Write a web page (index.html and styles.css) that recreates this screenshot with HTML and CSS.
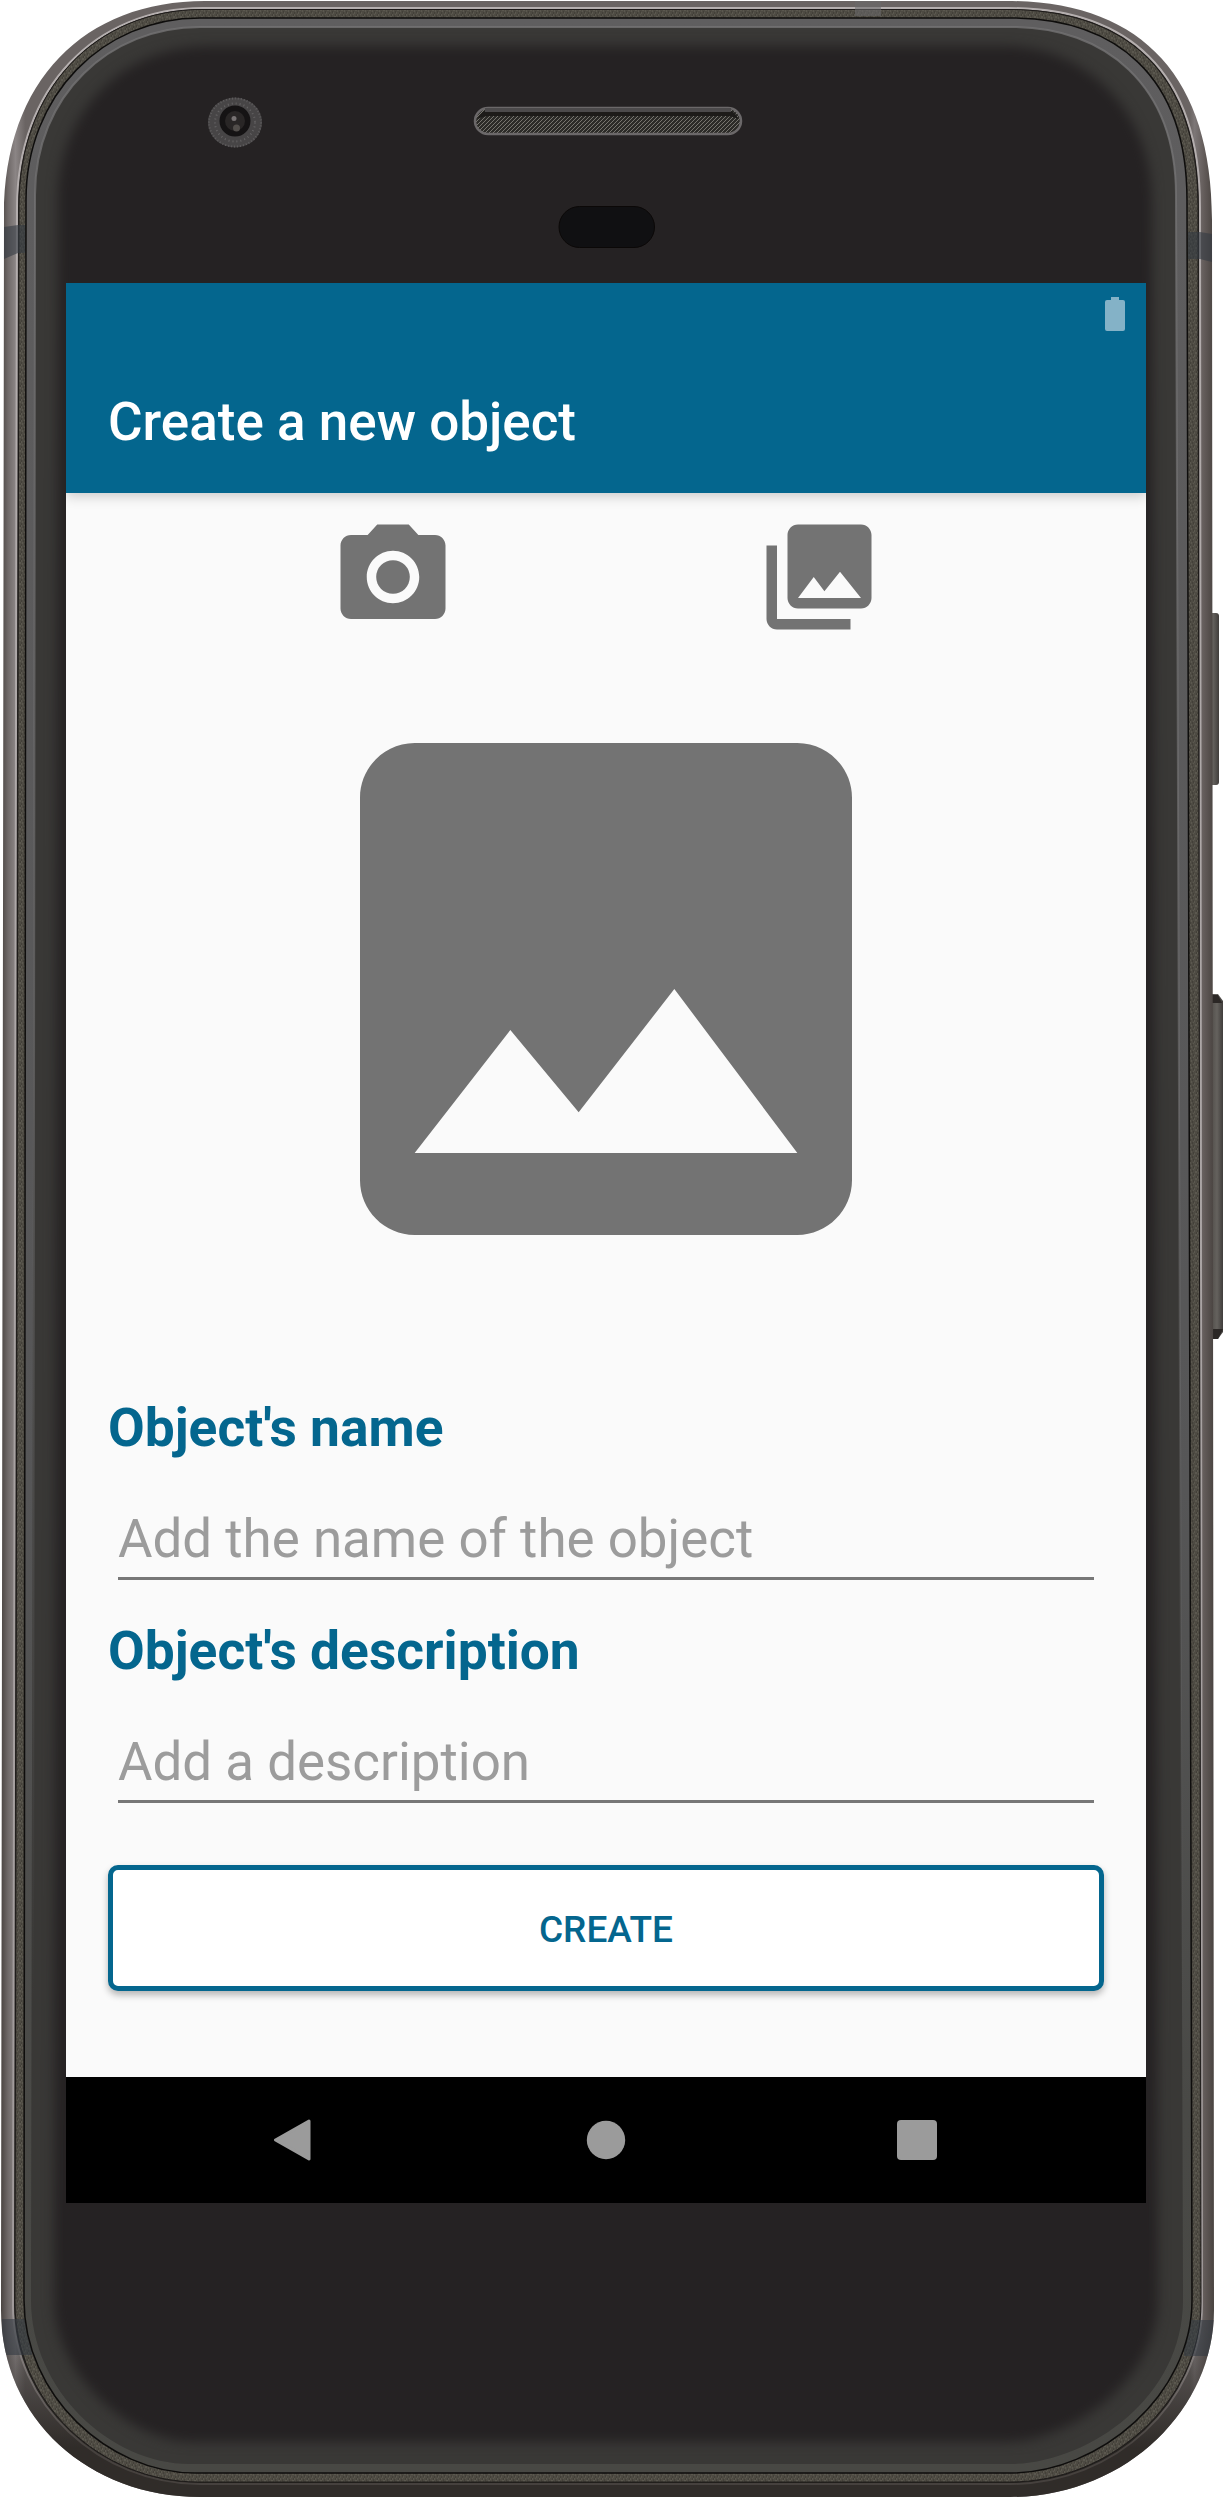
FILE: index.html
```html
<!DOCTYPE html>
<html lang="en">
<head>
<meta charset="utf-8">
<title>Create a new object</title>
<link rel="stylesheet" href="styles.css">
</head>
<body>
<div class="device">
  <svg class="frame" width="1224" height="2498" viewBox="0 0 1224 2498" aria-hidden="true">
    <defs>
      <linearGradient id="metal" x1="0" x2="1" y1="0" y2="0">
        <stop offset="0" stop-color="#4a4441"/><stop offset=".006" stop-color="#706a69"/><stop offset=".012" stop-color="#8b8585"/>
        <stop offset=".02" stop-color="#6a6463"/><stop offset=".98" stop-color="#6a6463"/><stop offset=".984" stop-color="#7d7777"/>
        <stop offset=".992" stop-color="#625b59"/><stop offset="1" stop-color="#494340"/>
      </linearGradient>
      <linearGradient id="shade" x1="0" x2="0" y1="0" y2="1">
        <stop offset="0" stop-color="#2c2a28" stop-opacity="0"/><stop offset=".93" stop-color="#2c2a28" stop-opacity="0"/>
        <stop offset=".98" stop-color="#302c29" stop-opacity="1"/><stop offset="1" stop-color="#302c29"/>
      </linearGradient>
      <linearGradient id="rim" x1="0" x2="0" y1="0" y2="1">
        <stop offset="0" stop-color="#5f5e5f"/><stop offset=".6" stop-color="#565657"/><stop offset=".85" stop-color="#494946"/><stop offset="1" stop-color="#484844"/>
      </linearGradient>
      <linearGradient id="edge" x1="0" x2="0" y1="0" y2="1">
        <stop offset="0" stop-color="#b5afaf"/><stop offset=".93" stop-color="#a09a9a"/><stop offset=".985" stop-color="#46413e"/>
      </linearGradient>
      <linearGradient id="glint" gradientUnits="userSpaceOnUse" x1="0" x2="0" y1="0" y2="2000">
        <stop offset="0" stop-color="#747374" stop-opacity=".8"/><stop offset=".5" stop-color="#747374" stop-opacity=".6"/><stop offset="1" stop-color="#747374" stop-opacity="0"/>
      </linearGradient>
      <linearGradient id="key" x1="0" x2="1" y1="0" y2="0">
        <stop offset="0" stop-color="#47433f"/><stop offset=".6" stop-color="#65625e"/><stop offset="1" stop-color="#403d3b"/>
      </linearGradient>
      <pattern id="grain" width="7" height="7" patternUnits="userSpaceOnUse">
        <rect width="7" height="7" fill="#4e4b43"/>
        <path d="M0 1h1M3 0h1M5 3h2M1 4h1M4 6h1" stroke="#68655b"/>
        <path d="M2 2h1M6 1h1M3 5h1M0 6h1" stroke="#37352f"/>
      </pattern>
      <pattern id="mesh" width="4" height="4" patternUnits="userSpaceOnUse">
        <rect width="4" height="4" fill="#2c2b28"/><path d="M-1 3L3 -1M1 5L5 1" stroke="#77756f" stroke-width="1"/>
      </pattern>
      <filter id="soft" x="-5%" y="-5%" width="110%" height="110%" color-interpolation-filters="sRGB"><feGaussianBlur stdDeviation="6"/></filter>
      <clipPath id="glassClip"><path d="M200 27H1012C1105 27 1176 85 1176 195L1183 2300C1183 2400 1085 2464 1010 2464H190C110 2464 31 2390 31 2300L35 195C35 95 110 27 200 27Z"/></clipPath>
      <clipPath id="bodyClip"><path d="M205 1H1007C1140 1 1212 75 1212 220L1214 2310C1214 2410 1125 2497 1010 2497H200C90 2497 1 2420 1 2310L4 215C4 80 85 1 205 1Z"/></clipPath>
    </defs>

    <rect x="1204" y="613" width="15" height="172" rx="3" fill="url(#key)"/>
    <path d="M1208 994h10l5 7V1332l-5 7h-10z" fill="url(#key)"/>
    <path d="M1208 995h10l4 8h-14zM1208 1329h15l-5 10h-10z" fill="#2b2725"/>

    <path d="M205 1H1007C1140 1 1212 75 1212 220L1214 2310C1214 2410 1125 2497 1010 2497H200C90 2497 1 2420 1 2310L4 215C4 80 85 1 205 1Z" fill="url(#metal)"/>
    <path d="M205 1H1007C1140 1 1212 75 1212 220L1214 2310C1214 2410 1125 2497 1010 2497H200C90 2497 1 2420 1 2310L4 215C4 80 85 1 205 1Z" fill="url(#shade)"/>
    <path d="M203 8H1008C1127 8 1200 70 1200 208L1202 2305C1202 2402 1115 2484 1010 2484H200C100 2484 13 2405 13 2305L17 208C17 88 95 8 203 8Z" fill="#262421" stroke="url(#edge)" stroke-width="2"/>
    <path d="M202 9.500H1008C1125 9.500 1198 71 1198 206L1201 2303C1201 2400 1112 2482 1010 2482H198C100 2482 15 2402 15 2303L19 206C19 89 96 9.500 202 9.500Z" fill="url(#grain)" stroke="#1d1a19" stroke-width="1"/>
    <g clip-path="url(#bodyClip)">
      <path d="M4 227l14-2h8v28h-8l-14 6zM1188 232h12l12 2v28l-12-3h-12zM2 2319h30v36H2zM1184 2320h32v36h-32z" fill="#343a42" fill-opacity=".6"/>
      <path d="M855 0h26v16h-26z" fill="#6a696b" fill-opacity=".55"/>
    </g>
    <path d="M200 18H1010C1115 18 1187 75 1187 200L1192 2300C1192 2395 1100 2473 1010 2473H195C108 2473 24 2395 24 2300L26 200C26 95 103 18 200 18Z" fill="url(#rim)" stroke="#0e0d0c" stroke-width="1.500"/>
    <g clip-path="url(#glassClip)">
      <rect width="1224" height="2498" fill="#393836"/>
      <path d="M210 46H1005C1084 46 1152 110 1152 200L1158 2300C1158 2380 1070 2442 1005 2442H195C125 2442 54 2370 54 2300L58 200C58 115 120 46 210 46Z" fill="#252223" filter="url(#soft)"/>
    </g>
    <path d="M33 2000L35 195C35 95 110 27 200 27H1012C1105 27 1176 85 1176 195L1182 2000" fill="none" stroke="url(#glint)" stroke-width="2"/>

    <ellipse cx="235" cy="122.500" rx="27" ry="25" fill="#474546"/>
    <ellipse cx="235" cy="122.500" rx="26" ry="24" fill="none" stroke="#5e5c5d" stroke-width="2" stroke-dasharray="1 2"/>
    <ellipse cx="235" cy="122.500" rx="20" ry="19" fill="none" stroke="#656364" stroke-width="2" stroke-dasharray="1 3"/>
    <circle cx="235" cy="121" r="15.500" fill="#151314"/>
    <circle cx="235" cy="121" r="10" fill="#292626"/>
    <circle cx="234" cy="118.500" r="2.500" fill="#777273"/>
    <circle cx="236.500" cy="128" r="3.500" fill="#524e4b"/>

    <rect x="475" y="108" width="266" height="26" rx="13" fill="url(#mesh)" stroke="#6b6869" stroke-width="2.500"/>
    <path d="M478 119q3-9 12-9h236q9 0 12 9-5-3-12-3H490q-7 0-12 3z" fill="#1d1b19"/>
    <path d="M485 110H731" stroke="#4c4a4b" stroke-width="4"/>
    <rect x="559" y="206.500" width="95.500" height="41" rx="20.500" fill="#101012" stroke="#0b0807"/>
  </svg>

  <main class="screen">
    <div class="status-bar">
      <svg class="battery" width="20" height="34" viewBox="0 0 20 34"><path d="M6 0h8v3h4q2 0 2 2v27q0 2-2 2H2q-2 0-2-2V5q0-2 2-2h4z" fill="#84b2c7"/></svg>
    </div>
    <header class="app-bar"><h1 class="title">Create a new object</h1></header>
    <section class="content">
      <div class="sources">
        <svg class="source-icon" viewBox="0 0 24 24"><circle cx="12" cy="12" r="3.200"/><path d="M9 2L7.170 4H4c-1.100 0-2 .9-2 2v12c0 1.100.9 2 2 2h16c1.100 0 2-.9 2-2V6c0-1.100-.9-2-2-2h-3.170L15 2H9zm3 15c-2.760 0-5-2.240-5-5s2.240-5 5-5 5 2.240 5 5-2.240 5-5 5z"/></svg>
        <svg class="source-icon" viewBox="0 0 24 24"><path d="M22 16V4c0-1.100-.9-2-2-2H8c-1.100 0-2 .9-2 2v12c0 1.100.9 2 2 2h12c1.100 0 2-.9 2-2zm-11-4l2.030 2.710L16 11l4 5H8l3-4zM2 6v14c0 1.100.9 2 2 2h14v-2H4V6H2z"/></svg>
      </div>
      <svg class="preview" viewBox="0 0 24 24"><path d="M21 19V5c0-1.100-.9-2-2-2H5c-1.100 0-2 .9-2 2v14c0 1.100.9 2 2 2h14c1.100 0 2-.9 2-2zM8.500 13.500l2.500 3.010L14.500 12l4.500 6H5l3.500-4.500z"/></svg>
      <form class="form">
        <label class="label" for="name">Object's name</label>
        <input class="field" id="name" placeholder="Add the name of the object">
        <label class="label" for="description">Object's description</label>
        <input class="field" id="description" placeholder="Add a description">
        <button class="create" type="button">CREATE</button>
      </form>
    </section>
    <nav class="nav-bar">
      <svg width="42" height="42" viewBox="0 0 42 42"><path class="back" d="M35 2L1.500 21l33.500 19z"/></svg>
      <svg width="42" height="42" viewBox="0 0 42 42"><circle cx="21" cy="21" r="19.200"/></svg>
      <svg width="42" height="42" viewBox="0 0 42 42"><rect x="1" y="1" width="40" height="40" rx="4"/></svg>
    </nav>
  </main>
</div>
</body>
</html>
```
FILE: styles.css
```css
* { box-sizing: border-box; }
body { margin: 0; background: #fff; font-family: Roboto, "Liberation Sans", sans-serif; }
.device { position: relative; width: 1224px; height: 2498px; padding: 283px 78px 295px 66px; overflow: hidden; }
.frame { position: absolute; inset: 0; }
.screen { position: relative; display: flex; flex-direction: column; width: 1080px; height: 1920px; background: #fafafa; }
.status-bar { display: flex; justify-content: flex-end; flex: 0 0 63px; padding: 14px 21px 0 0; background: #04668e; }
.app-bar { display: flex; align-items: center; flex: 0 0 147px; padding: 5px 42px 0; background: #04668e; box-shadow: 0 3px 12px rgba(0, 0, 0, .2); clip-path: inset(0 0 -16px 0); }
.title { margin: 0; color: #fff; font-size: 53px; font-weight: 500; line-height: 62px; }
.content { display: flex; flex: 1; flex-direction: column; padding: 21px 42px 0; }
.sources { display: flex; justify-content: center; gap: 300px; height: 126px; }
.source-icon { width: 126px; height: 126px; fill: #737373; }
.preview { align-self: center; width: 656px; height: 656px; margin-top: 21px; fill: #737373; }
.form { display: flex; flex-direction: column; margin-top: 80px; }
.label { height: 62px; color: #04668e; font-size: 53.3px; font-weight: 700; line-height: 62px; }
.field { height: 121px; margin: 0 10px 40px; padding: 49px 0 7px; border: 0; border-bottom: 3px solid #777; outline: 0; background: none; font: 400 52.9px/62px Roboto, sans-serif; }
.field::placeholder { color: #9c9c9c; opacity: 1; }
.create { height: 126px; margin-top: 22px; padding: 2px 0 0; border: 5px solid #04668e; border-radius: 10px; background: #fff; box-shadow: 0 4px 7px rgba(0, 0, 0, .28); color: #04668e; font: 500 37px/43px Roboto, sans-serif; }
.nav-bar { display: flex; align-items: center; justify-content: center; gap: 269px; flex: 0 0 126px; background: #000; fill: #9b9b9b; }
.back { stroke: #9b9b9b; stroke-width: 3px; stroke-linejoin: round; }
```
